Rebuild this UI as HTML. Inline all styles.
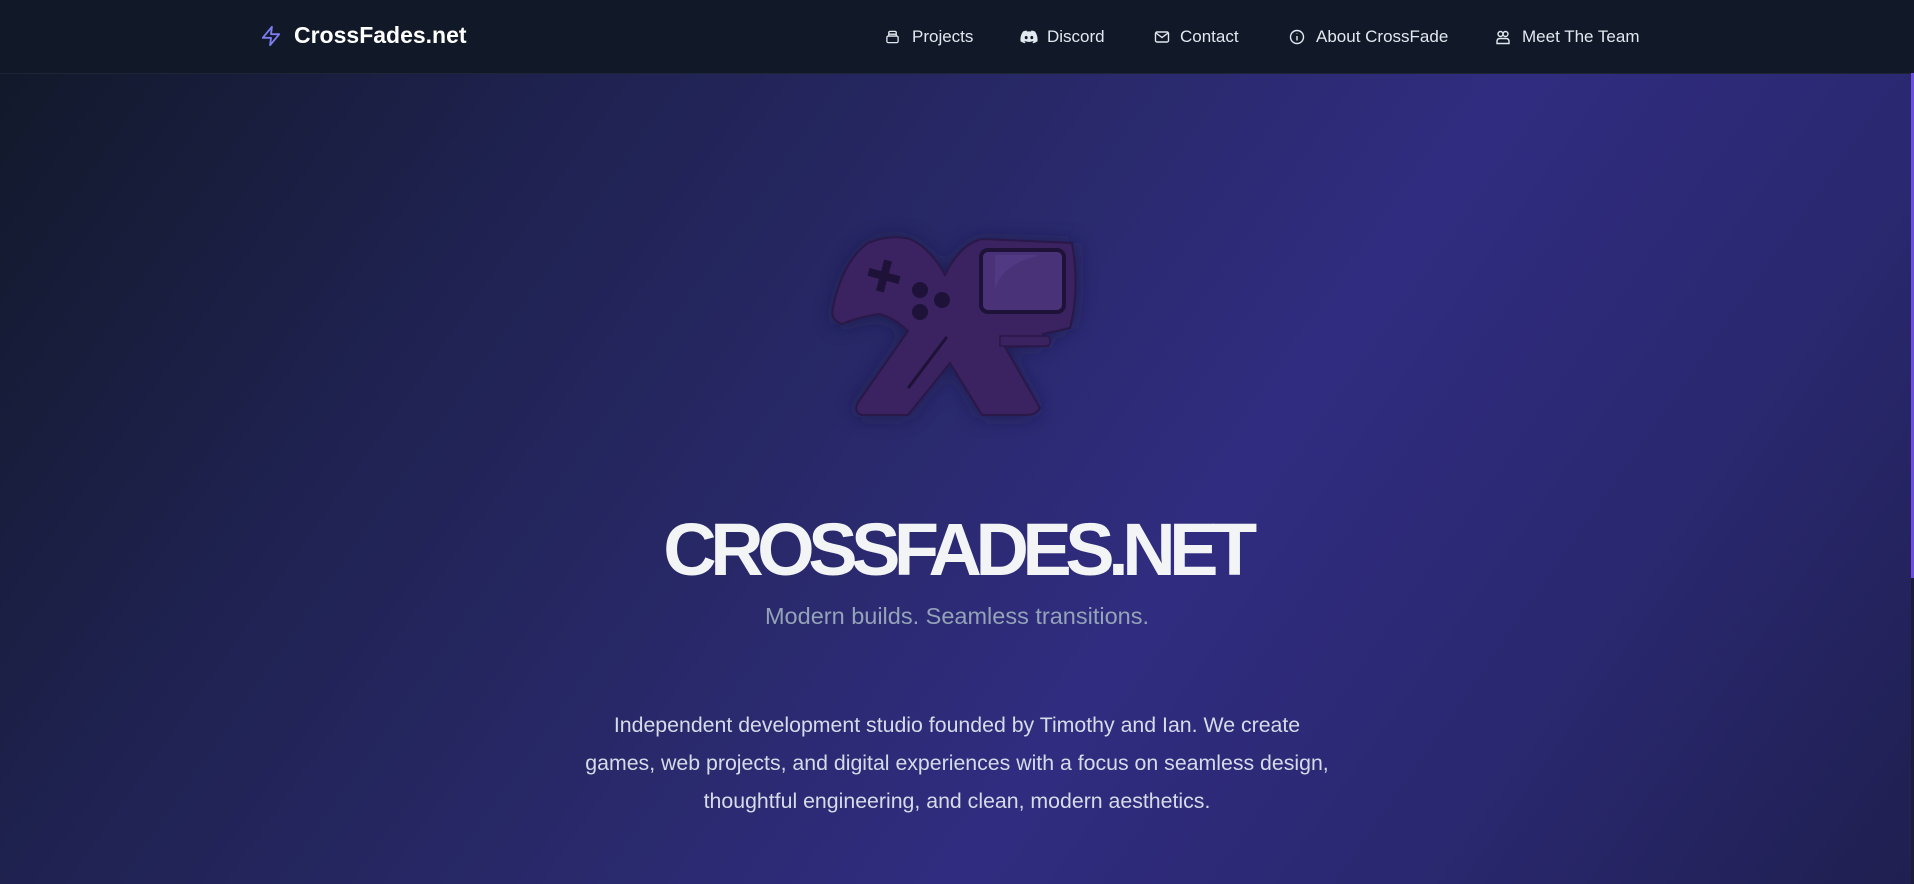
<!DOCTYPE html>
<html><head><meta charset="utf-8"><style>
*{margin:0;padding:0;box-sizing:border-box}
html,body{width:1914px;height:884px;overflow:hidden}
body{font-family:"Liberation Sans",sans-serif;position:relative;
background:linear-gradient(125deg,#111827 0%,#1f2250 25%,#2b2a70 50%,#302c80 62%,#2a2870 80%,#1f1f50 100%);}
nav{position:absolute;left:0;top:0;width:1914px;height:74px;background:#111827;border-bottom:1px solid #1e2536}
.brand{position:absolute;left:260px;top:22px;display:flex;align-items:center;color:#fff;font-weight:bold;font-size:23px}
.brand svg{margin-right:12px}
.item{position:absolute;top:27px;display:flex;align-items:center;color:#e2e8f0;font-size:17px;height:20px}
.item svg{position:absolute;left:0;top:2px}
.item span{position:absolute;white-space:nowrap;top:0}
h1{position:absolute;left:0;width:1914px;top:508px;text-align:center;color:#f3f4f6;font-size:74px;font-weight:bold;letter-spacing:-6.5px;line-height:84px}
.sub{position:absolute;left:0;width:1914px;top:603px;text-align:center;color:#94a3b8;font-size:23.5px}
.p{position:absolute;left:407px;width:1100px;top:706px;text-align:center;color:#d6dbe8;font-size:21.3px;line-height:38px}
.sb{position:absolute;left:1911px;top:73px;width:3px;height:505px;background:#6d4fe0}
.sb2{position:absolute;left:1911px;top:578px;width:3px;height:306px;background:#1a1c38}
</style></head><body>
<nav>
<div class="brand"><svg width="22" height="24" viewBox="0 0 24 24" fill="none" stroke="#7c7cf0" stroke-width="2" stroke-linejoin="round"><path d="M13 2L3 14h9l-1 8 10-12h-9l1-8z"/></svg>CrossFades.net</div>
<div class="item" style="left:885px"><svg width="15" height="16" viewBox="0 0 16 16" fill="none" stroke="#e2e8f0" stroke-width="1.4"><rect x="2" y="7" width="12" height="7" rx="1.5"/><path d="M4 7V3.5Q4 2 5.5 2h5Q12 2 12 3.5V7M4 5h8"/></svg><span style="left:27px">Projects</span></div>
<div class="item" style="left:1020px"><svg width="18" height="16" viewBox="0 0 18 14"><path fill="#e2e8f0" d="M15 1.5A14 14 0 0 0 11.5.5L11 1.5a13 13 0 0 0-4 0L6.5.5A14 14 0 0 0 3 1.5C.8 4.8.2 8 .5 11.2A14 14 0 0 0 4.8 13.3l.9-1.4-1.5-.7.4-.3a10 10 0 0 0 8.8 0l.4.3-1.5.7.9 1.4a14 14 0 0 0 4.3-2.1c.4-3.7-.6-6.9-2.5-9.7zM6.2 9.3c-.8 0-1.5-.8-1.5-1.700s.7-1.7 1.5-1.7 1.5.8 1.5 1.7-.7 1.7-1.5 1.7zm5.6 0c-.8 0-1.5-.8-1.5-1.7s.7-1.7 1.5-1.7 1.5.8 1.5 1.7-.7 1.7-1.5 1.7z"/></svg><span style="left:27px">Discord</span></div>
<div class="item" style="left:1154px"><svg width="16" height="16" viewBox="0 0 16 16" fill="none" stroke="#e2e8f0" stroke-width="1.4"><rect x="1.5" y="3" width="13" height="10" rx="1.5"/><path d="M2 4l6 4.5L14 4"/></svg><span style="left:26px">Contact</span></div>
<div class="item" style="left:1289px"><svg width="16" height="16" viewBox="0 0 16 16" fill="none" stroke="#e2e8f0" stroke-width="1.4"><circle cx="8" cy="8" r="6.5"/><path d="M8 7v4.5M8 4.5v.5"/></svg><span style="left:27px">About CrossFade</span></div>
<div class="item" style="left:1495px"><svg width="16" height="16" viewBox="0 0 16 16" fill="none" stroke="#e2e8f0" stroke-width="1.4"><circle cx="5.5" cy="5" r="2.5"/><circle cx="10.5" cy="5" r="2.5"/><path d="M2 14.5v-2Q2 9.5 5 9.5h6q3 0 3 3v2z"/></svg><span style="left:27px">Meet The Team</span></div>
</nav>
<svg style="position:absolute;left:800px;top:210px" width="320" height="230" viewBox="0 0 320 230">
<defs><filter id="g" x="-30%" y="-30%" width="160%" height="160%"><feGaussianBlur stdDeviation="10"/></filter></defs>
<g opacity="0.55" filter="url(#g)"><path fill="#15123a" d="M35 100Q45 50 70 33Q90 25 110 30Q130 40 145 65Q160 35 180 30L275 33Q280 80 272 118L245 125L250 137L205 137L240 200Q235 207 225 207L180 207L150 155L108 207L60 207Q52 205 56 196L108 122Q90 108 78 106Q55 110 40 116Q30 112 35 100Z"/></g>
<path fill="#3a2360" stroke="#2a1848" stroke-width="2" d="M33 98Q42 52 68 33Q90 24 110 29Q130 38 145 65Q160 34 182 29L272 33Q280 80 270 118L243 124L248 136L205 137L240 198Q236 205 226 205L182 205L150 153L108 205L62 205Q54 203 57 194L108 121Q92 106 78 104Q56 108 42 114Q30 110 33 98Z"/>
<path fill="#3a2360" stroke="#2a1848" stroke-width="1.5" d="M200 126h46q4 0 4 4v2q0 4-4 4h-46z"/>
<rect x="181" y="40" width="83" height="62" rx="7" fill="#4a3278" stroke="#1e1238" stroke-width="4"/>
<path d="M195 80Q200 55 240 45L195 45Z" fill="#57408a" opacity="0.6"/>
<path d="M80 50h8v12h12v8H88v12h-8V70H68v-8h12z" fill="#1e1238" transform="rotate(15 84 66)"/>
<circle cx="120" cy="80" r="8" fill="#1e1238"/><circle cx="142" cy="90" r="8" fill="#1e1238"/><circle cx="120" cy="102" r="8" fill="#1e1238"/>
<path d="M146 128L109 177" stroke="#1e1238" stroke-width="3" stroke-linecap="round"/>
</svg>
<h1>CROSSFADES.NET</h1>
<div class="sub">Modern builds. Seamless transitions.</div>
<div class="p">Independent development studio founded by Timothy and Ian. We create<br>games, web projects, and digital experiences with a focus on seamless design,<br>thoughtful engineering, and clean, modern aesthetics.</div>
<div class="sb"></div><div class="sb2"></div>
</body></html>
